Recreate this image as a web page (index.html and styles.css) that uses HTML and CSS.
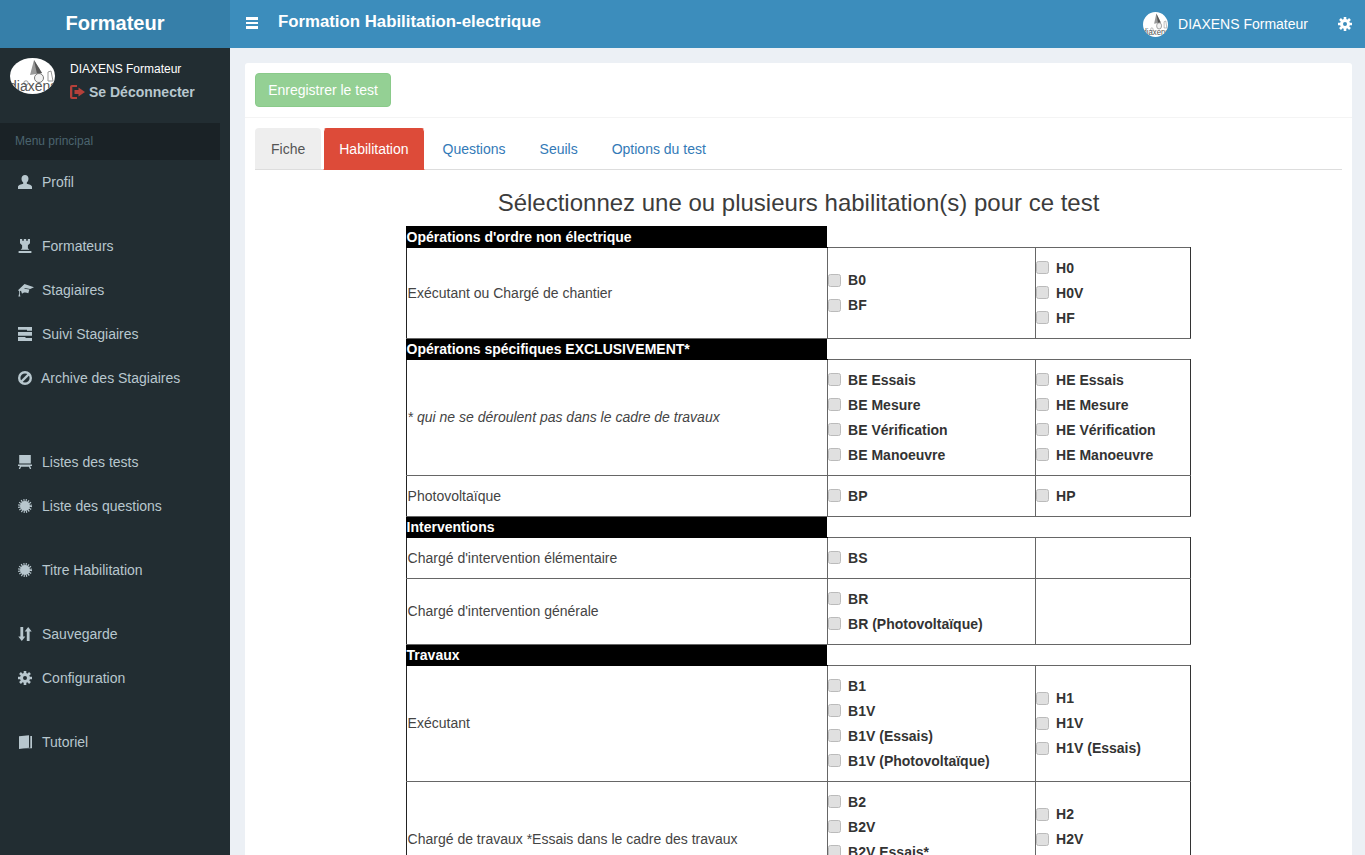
FILE: index.html
```html
<!DOCTYPE html>
<html lang="fr">
<head>
<meta charset="utf-8">
<title>Formation Habilitation-electrique</title>
<link rel="stylesheet" href="styles.css">
</head>
<body>
<svg class="defs" aria-hidden="true">
  <symbol id="i-avatar" viewBox="0 0 45 36" preserveAspectRatio="none">
    <rect width="45" height="36" fill="#fff"/>
    <path d="M24 2l8 13-12 2z" fill="#999"/>
    <path d="M24 2l8 13-5 1z" fill="#555"/>
    <circle cx="29" cy="20" r="4.500" fill="#f2f2f2" stroke="#777"/>
    <circle cx="16" cy="25" r="2.200" fill="none" stroke="#999"/>
    <path d="M38 14l3-1 2 10h-5z" fill="none" stroke="#999"/>
    <text x="-1" y="33" class="avatar-text">diaxens</text>
  </symbol>
  <symbol id="i-user" viewBox="0 0 14 14"><path d="M7 0c2.100 0 3.500 1.500 3.500 3.800 0 1.500-.7 3-1.700 3.800v1.100c1.900.6 5.200 1.300 5.200 3.100V14H0v-2.200c0-1.800 3.300-2.500 5.200-3.100V7.600C4.200 6.800 3.500 5.300 3.500 3.800 3.500 1.500 4.900 0 7 0z"/></symbol>
  <symbol id="i-tower" viewBox="0 0 14 14"><path d="M2 0h2.200v1.700h1.600V0h2.400v1.700h1.600V0H12v4.200L9.900 6.200v3.100l1.500 1.500H2.600l1.500-1.500V6.200L2 4.200zM.6 11.900h12.800V14H.6z"/></symbol>
  <symbol id="i-edu" viewBox="0 0 16 14"><path d="M6.500 1L16 4.200l-3.800 1.700-5.700-.9.100.7 4.800.9-1.100 3.700C8 9 5.800 9 4 10.800L3 7.700 1.800 8.300v2.800l.6 2.400H.4l.6-2.400V7.900L0 7.200z"/></symbol>
  <symbol id="i-tasks" viewBox="0 0 14 14"><path d="M0 0h14v3.800H9v-1H0zM0 5h14v3.800H0zM0 10h7.500v1H14v3H0z"/></symbol>
  <symbol id="i-ban" viewBox="0 0 14 14"><circle cx="7" cy="7" r="5.800" fill="none" stroke="currentColor" stroke-width="2.400"/><path d="M3 11l8-8" stroke="currentColor" stroke-width="2.400"/></symbol>
  <symbol id="i-board" viewBox="0 0 14 14"><path d="M1.200 0h11.600v8.400H1.200zM0 9.500h14v1.500h-1.800l1 3h-1.300l-1-2.300H3.100l-1 2.300H.8l1-3H0z"/></symbol>
  <symbol id="i-cert" viewBox="0 0 14 14"><circle cx="7" cy="7" r="5"/><circle cx="7" cy="7" r="5.800" fill="none" stroke="currentColor" stroke-width="2.400" stroke-dasharray="1.100 1.178"/></symbol>
  <symbol id="i-sort" viewBox="0 0 14 14"><path d="M2.400 0h2.800v9.500h2.100L3.800 14 .3 9.500h2.100zM8.800 14h2.800V4.500h2.100L10.200 0 6.700 4.500h2.100z"/></symbol>
  <symbol id="i-cog" viewBox="0 0 14 14"><circle cx="7" cy="7" r="3.500" fill="none" stroke="currentColor" stroke-width="3"/><path d="M7 0v3M7 11v3M0 7h3M11 7h3M2 2l2.200 2.200M9.800 9.800L12 12M12 2L9.800 4.200M4.200 9.800L2 12" stroke="currentColor" stroke-width="2.600"/></symbol>
  <symbol id="i-book" viewBox="0 0 14 14"><path d="M1 1.200L11 .2v12.600L1 14z"/><path d="M12.300 1H14v12.200H5l7.300-.5z"/></symbol>
  <symbol id="i-logout" viewBox="0 0 15 14"><path d="M0 2a2 2 0 0 1 2-2h5v2H2.300v10H7v2H2a2 2 0 0 1-2-2z"/><path d="M8.500 2.500L15 7l-6.500 4.500V9H4.500V5h4z"/></symbol>
</svg>

<aside class="sidebar">
  <div class="logo">Formateur</div>
  <div class="user-panel">
    <svg class="user-img"><use href="#i-avatar"/></svg>
    <div class="user-info">
      <div class="user-name">DIAXENS Formateur</div>
      <a class="logout"><svg class="logout-icon"><use href="#i-logout"/></svg>Se Déconnecter</a>
    </div>
  </div>
  <div class="menu-header">Menu principal</div>
  <nav class="menu">
    <a class="item"><svg class="ico"><use href="#i-user"/></svg>Profil</a>
    <a class="item gap-s"><svg class="ico"><use href="#i-tower"/></svg>Formateurs</a>
    <a class="item"><svg class="ico ico-wide"><use href="#i-edu"/></svg>Stagiaires</a>
    <a class="item"><svg class="ico"><use href="#i-tasks"/></svg>Suivi Stagiaires</a>
    <a class="item item-tight"><svg class="ico"><use href="#i-ban"/></svg>Archive des Stagiaires</a>
    <a class="item gap-l"><svg class="ico"><use href="#i-board"/></svg>Listes des tests</a>
    <a class="item"><svg class="ico"><use href="#i-cert"/></svg>Liste des questions</a>
    <a class="item gap-s"><svg class="ico"><use href="#i-cert"/></svg>Titre Habilitation</a>
    <a class="item gap-s"><svg class="ico"><use href="#i-sort"/></svg>Sauvegarde</a>
    <a class="item"><svg class="ico"><use href="#i-cog"/></svg>Configuration</a>
    <a class="item gap-s"><svg class="ico"><use href="#i-book"/></svg>Tutoriel</a>
  </nav>
</aside>

<div class="main">
  <header class="topbar">
    <span class="burger"><i></i><i></i><i></i></span>
    <h1 class="page-title">Formation Habilitation-electrique</h1>
    <div class="top-right">
      <svg class="top-avatar"><use href="#i-avatar"/></svg>
      <span class="top-name">DIAXENS Formateur</span>
      <svg class="top-cog"><use href="#i-cog"/></svg>
    </div>
  </header>

  <section class="content">
    <div class="box">
      <div class="box-head"><button class="btn-save" type="button">Enregistrer le test</button></div>
      <div class="box-body">
        <ul class="tabs">
          <li class="tab tab-muted">Fiche</li>
          <li class="tab tab-active">Habilitation</li>
          <li class="tab">Questions</li>
          <li class="tab">Seuils</li>
          <li class="tab">Options du test</li>
        </ul>
        <h3 class="heading">Sélectionnez une ou plusieurs habilitation(s) pour ce test</h3>
        <table class="hab">
          <colgroup><col class="c1"><col class="c2"><col class="c3"></colgroup>
          <tr class="sec"><th>Opérations d'ordre non électrique</th></tr>
          <tr>
            <td>Exécutant ou Chargé de chantier</td>
            <td><label><input type="checkbox">B0</label><label><input type="checkbox">BF</label></td>
            <td><label><input type="checkbox">H0</label><label><input type="checkbox">H0V</label><label><input type="checkbox">HF</label></td>
          </tr>
          <tr class="sec"><th>Opérations spécifiques EXCLUSIVEMENT*</th></tr>
          <tr>
            <td><em>* qui ne se déroulent pas dans le cadre de travaux</em></td>
            <td><label><input type="checkbox">BE Essais</label><label><input type="checkbox">BE Mesure</label><label><input type="checkbox">BE Vérification</label><label><input type="checkbox">BE Manoeuvre</label></td>
            <td><label><input type="checkbox">HE Essais</label><label><input type="checkbox">HE Mesure</label><label><input type="checkbox">HE Vérification</label><label><input type="checkbox">HE Manoeuvre</label></td>
          </tr>
          <tr>
            <td>Photovoltaïque</td>
            <td><label><input type="checkbox">BP</label></td>
            <td><label><input type="checkbox">HP</label></td>
          </tr>
          <tr class="sec"><th>Interventions</th></tr>
          <tr>
            <td>Chargé d'intervention élémentaire</td>
            <td><label><input type="checkbox">BS</label></td>
            <td></td>
          </tr>
          <tr>
            <td>Chargé d'intervention générale</td>
            <td><label><input type="checkbox">BR</label><label><input type="checkbox">BR (Photovoltaïque)</label></td>
            <td></td>
          </tr>
          <tr class="sec"><th>Travaux</th></tr>
          <tr>
            <td>Exécutant</td>
            <td><label><input type="checkbox">B1</label><label><input type="checkbox">B1V</label><label><input type="checkbox">B1V (Essais)</label><label><input type="checkbox">B1V (Photovoltaïque)</label></td>
            <td><label><input type="checkbox">H1</label><label><input type="checkbox">H1V</label><label><input type="checkbox">H1V (Essais)</label></td>
          </tr>
          <tr>
            <td>Chargé de travaux *Essais dans le cadre des travaux</td>
            <td><label><input type="checkbox">B2</label><label><input type="checkbox">B2V</label><label><input type="checkbox">B2V Essais*</label><label><input type="checkbox">B2V (Photovoltaïque)</label></td>
            <td><label><input type="checkbox">H2</label><label><input type="checkbox">H2V</label><label><input type="checkbox">H2V Essais*</label></td>
          </tr>
        </table>
      </div>
    </div>
  </section>
</div>
</body>
</html>
```
FILE: styles.css
```css
* { box-sizing: border-box; }
html, body { margin: 0; height: 100%; overflow: hidden; }
body {
  display: flex;
  font-family: "Liberation Sans", Arial, sans-serif;
  font-size: 14px;
  line-height: 20px;
  color: #333;
  background: #ecf0f5;
}
.defs { width: 0; height: 0; display: none; }
.avatar-text { font: 14px "Liberation Sans", sans-serif; fill: #555; }

.sidebar { width: 230px; flex: none; background: #222d32; color: #b8c7ce; height: 855px; }
.logo {
  height: 48px;
  background: #367fa9;
  color: #fff;
  font-size: 20px;
  font-weight: 700;
  line-height: 47px;
  text-align: center;
}
.user-panel { display: flex; height: 75px; padding: 10px 0 0 10px; }
.user-img { width: 45px; height: 36px; border-radius: 50%; flex: none; }
.user-info { margin-left: 15px; padding-top: 1px; }
.user-name { color: #fff; font-size: 12px; line-height: 20px; }
.logout { display: flex; align-items: center; font-weight: 700; line-height: 26px; color: #b8c7ce; }
.logout-icon { width: 15px; height: 14px; margin-right: 4px; fill: #b5403a; }
.menu-header {
  width: 220px;
  height: 37px;
  padding-left: 15px;
  background: #1a2226;
  color: #4b646f;
  font-size: 12px;
  line-height: 36px;
}
.item { display: flex; align-items: center; height: 44px; padding-left: 18px; }
.ico { width: 14px; height: 14px; margin-right: 10px; flex: none; fill: #b8c7ce; color: #b8c7ce; }
.ico-wide { width: 16px; margin-right: 8px; }
.item-tight .ico { margin-right: 9px; }
.gap-s { margin-top: 20px; }
.gap-l { margin-top: 40px; }

.main { flex: 1; min-width: 0; }
.topbar { display: flex; align-items: center; height: 48px; background: #3c8dbc; color: #fff; }
.burger { display: flex; flex-direction: column; gap: 2px; width: 12px; margin: -2px 0 0 16px; }
.burger i { display: block; height: 2.400px; background: #fff; }
.page-title { margin: -4px 0 0 20px; font-size: 16.800px; font-weight: 700; line-height: 20px; }
.top-right { display: flex; align-items: center; margin-left: auto; }
.top-avatar { width: 25px; height: 25px; border-radius: 50%; }
.top-name { margin-left: 10px; }
.top-cog { width: 14px; height: 14px; margin: 0 13px 0 30px; color: #fff; }

.content { padding: 15px 13px 0 15px; }
.box { background: #fff; border-radius: 3px; min-height: 900px; }
.box-head { height: 55px; padding: 10px; border-bottom: 1px solid #f4f4f4; }
.btn-save {
  width: 136px;
  height: 34px;
  padding: 0;
  font: 14px/20px "Liberation Sans", Arial, sans-serif;
  color: #fff;
  background: #5cb85c;
  border: 1px solid #4cae4c;
  border-radius: 4px;
  opacity: .65;
}
.box-body { padding: 10px; }
.tabs { display: flex; height: 42px; margin: 0; padding: 0; list-style: none; border-bottom: 1px solid #ddd; }
.tab {
  height: 42px;
  margin-right: 2px;
  padding: 10px 15px;
  border: 1px solid transparent;
  border-radius: 4px 4px 0 0;
  color: #337ab7;
}
.tab-muted { background: #eee; color: #555; height: 41px; }
.tab-active { background: #dd4b39; color: #fff; border-color: #dd4b39 #fff #dd4b39 #fff; }
.heading { margin: 20px 0 10px; font-size: 24px; font-weight: 400; line-height: 26px; text-align: center; color: #3c3c3c; }

.hab { width: 784px; margin: 0 0 0 150.600px; border-collapse: collapse; table-layout: fixed; }
.c1 { width: 421px; }
.c2 { width: 208px; }
.c3 { width: 155px; }
.hab th { height: 21px; padding: 0; background: #000; color: #fff; text-align: left; line-height: 20px; border: 1px solid #000; border-right: 0; }
.hab td { padding: 7px 0 8px; border: 1px solid #666; vertical-align: middle; color: #444; }
.hab td:first-child { padding-left: 1px; border-left-color: #222; }
.hab td:last-child { border-right-color: #333; }
.hab label { display: flex; align-items: center; height: 25px; font-weight: 700; color: #333; }
.hab input {
  appearance: none;
  width: 13px;
  height: 13px;
  margin: 0 7.500px 0 0;
  background: #e0e0e0;
  border: 1px solid #bbb;
  border-radius: 2.500px;
}
```
